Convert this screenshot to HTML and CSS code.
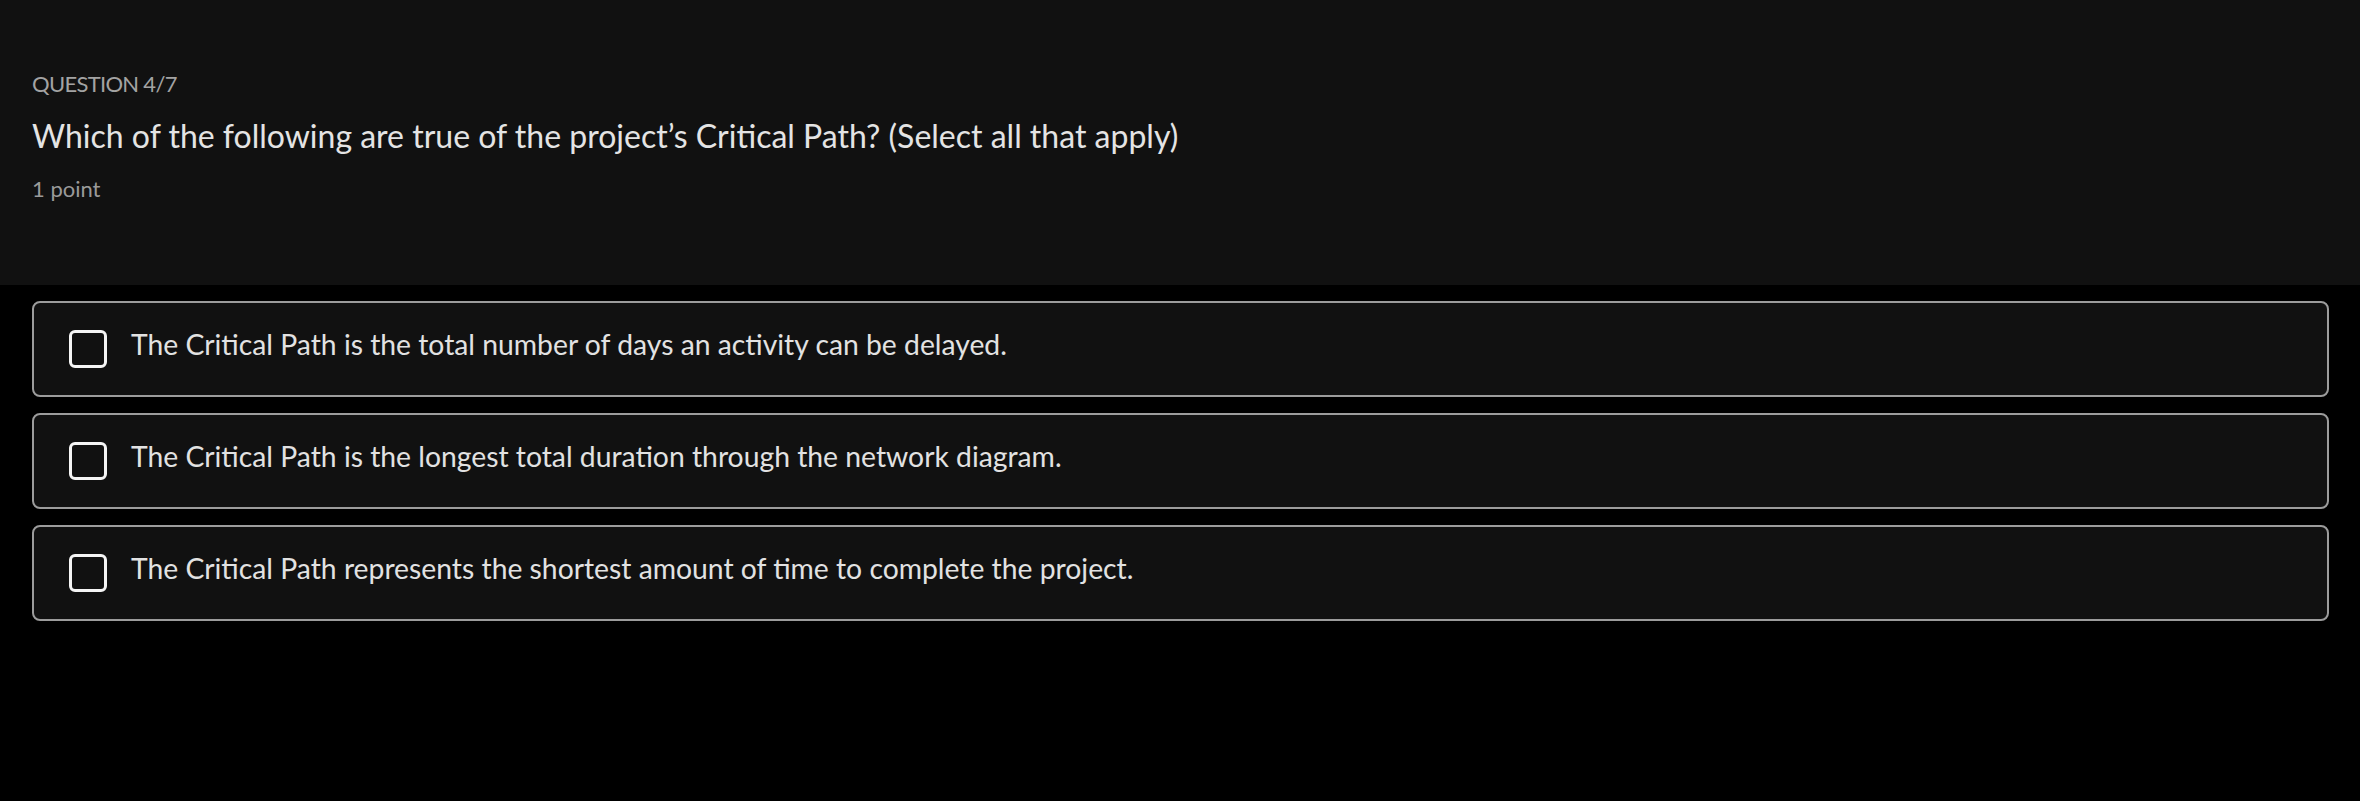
FILE: index.html
```html
<!DOCTYPE html>
<html lang="en">
<head>
<meta charset="utf-8">
<title>Question 4/7</title>
<link rel="stylesheet" href="styles.css">
</head>
<body>
<header class="question-header">
  <div class="question-label">QUESTION 4/7</div>
  <h1 class="question-title">Which of the following are true of the project’s Critical Path? (Select all that apply)</h1>
  <div class="question-points">1 point</div>
</header>
<main class="options">
  <label class="option">
    <span class="checkbox"></span>
    <span class="option-text">The Critical Path is the total number of days an activity can be delayed.</span>
  </label>
  <label class="option">
    <span class="checkbox"></span>
    <span class="option-text">The Critical Path is the longest total duration through the network diagram.</span>
  </label>
  <label class="option">
    <span class="checkbox"></span>
    <span class="option-text">The Critical Path represents the shortest amount of time to complete the project.</span>
  </label>
</main>
</body>
</html>
```
FILE: styles.css
```css
html, body {
  margin: 0;
  padding: 0;
  background: #000;
}
body {
  font-family: Lato, "Noto Sans", sans-serif;
  color: #e6e6e6;
}
.question-header {
  background: #111111;
  height: 285px;
  box-sizing: border-box;
  padding: 71px 32px 0 32px;
}
.question-label {
  font-size: 22px;
  line-height: 1.2;
  letter-spacing: -0.7px;
  color: #a3a3a3;
}
.question-title {
  margin: 20px 0 0 0;
  font-size: 32px;
  line-height: 1.2;
  font-weight: 400;
  color: #e4e4e4;
}
.question-points {
  margin-top: 20px;
  font-size: 22px;
  line-height: 1.2;
  color: #9a9a9a;
}
.options {
  display: flex;
  flex-direction: column;
  gap: 16px;
  padding: 16px 31px 0 32px;
}
.option {
  display: flex;
  align-items: center;
  gap: 24px;
  height: 96px;
  box-sizing: border-box;
  border: 2px solid #9c9c9c;
  border-radius: 8px;
  background: #111111;
  padding-left: 35px;
}
.checkbox {
  flex: none;
  width: 38px;
  height: 38px;
  box-sizing: border-box;
  border: 3px solid #f5f5f5;
  border-radius: 6px;
}
.option-text {
  font-size: 28.3px;
  line-height: 1.2;
  color: #e2e2e2;
  padding-bottom: 9px;
}
```
